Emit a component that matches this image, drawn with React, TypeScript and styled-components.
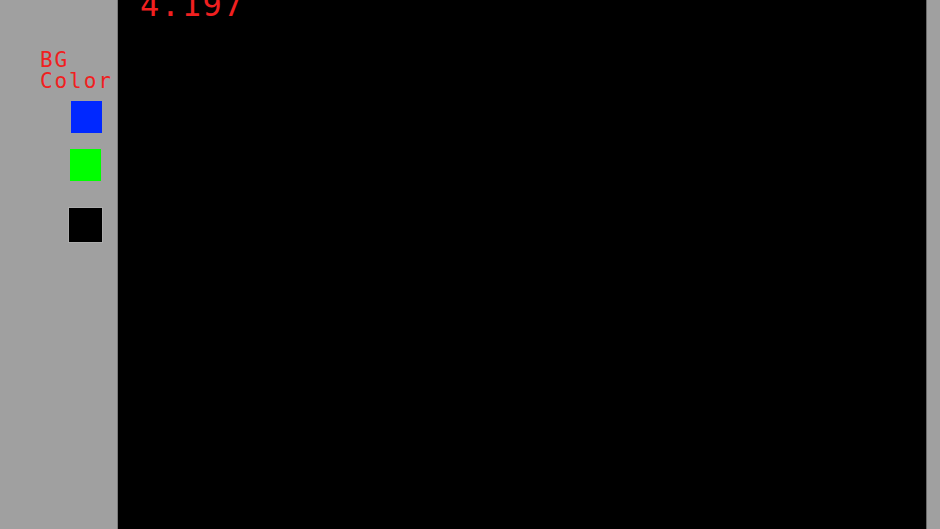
import React from "react";
import styled, { createGlobalStyle } from "styled-components";

const Global = createGlobalStyle`
  html, body { margin: 0; padding: 0; background: #a0a0a0; overflow: hidden; }
  #root { width: 940px; height: 529px; }
`;

const Window = styled.div`
  display: flex;
  flex-direction: row;
  width: 940px;
  height: 529px;
  background: #a0a0a0;
  font-family: "DejaVu Sans Mono", "Liberation Mono", monospace;
`;

const Sidebar = styled.div`
  width: 117px;
  flex: none;
  display: flex;
  flex-direction: column;
  align-items: flex-start;
  padding-top: 50px;
  box-sizing: border-box;
`;

const Label = styled.div`
  margin-left: 40px;
  color: #f02020;
  font-size: 21px;
  line-height: 21px;
  letter-spacing: 1.9px;
`;

const Swatch = styled.div<{ $color: string; $left: number; $top: number; $w: number; $h: number; $framed?: boolean }>`
  width: ${(p) => p.$w}px;
  height: ${(p) => p.$h}px;
  margin-left: ${(p) => p.$left}px;
  margin-top: ${(p) => p.$top}px;
  background: ${(p) => p.$color};
  box-sizing: border-box;
  ${(p) => (p.$framed ? "outline: 1px solid #adadad;" : "")}
`;

const Canvas = styled.div`
  flex: 1;
  background: #000;
  border-left: 1px solid #7a7a7a;
  border-right: 1px solid #6a6a6a;
  overflow: hidden;
  padding-left: 22px;
`;

const Readout = styled.div`
  margin-top: -11px;
  color: #f02020;
  font-size: 32px;
  line-height: 32px;
  letter-spacing: 1.6px;
`;

const RightStrip = styled.div`
  width: 13px;
  flex: none;
  background: #a0a0a0;
`;

export default function App() {
  return (
    <>
      <Global />
      <Window>
        <Sidebar>
          <Label>
            BG
            <br />
            Color
          </Label>
          <Swatch $color="#0028ff" $left={71} $top={9} $w={31} $h={32} />
          <Swatch $color="#00ff00" $left={70} $top={16} $w={31} $h={32} />
          <Swatch $color="#000000" $left={69} $top={27} $w={33} $h={34} $framed />
        </Sidebar>
        <Canvas>
          <Readout>4.197</Readout>
        </Canvas>
        <RightStrip />
      </Window>
    </>
  );
}
